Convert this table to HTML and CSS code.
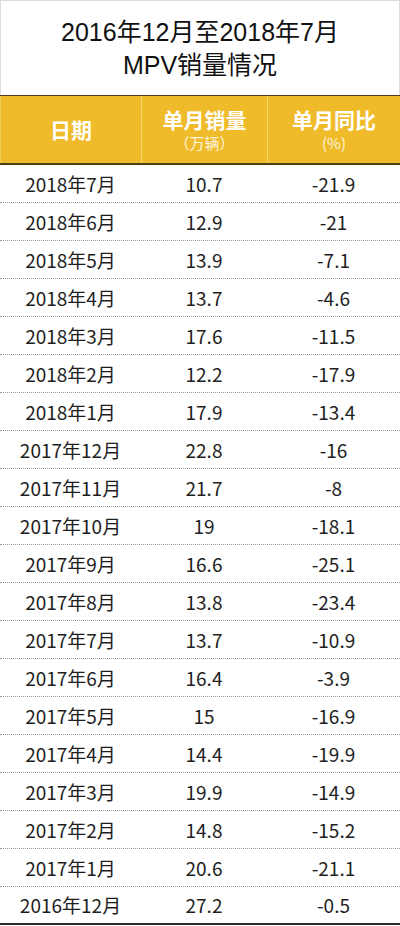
FILE: index.html
```html
<!DOCTYPE html>
<html lang="zh">
<head>
<meta charset="utf-8">
<link rel="stylesheet" href="styles.css">
</head>
<body>
<div class="page">
  <div class="title">
    <div>2016年12月至2018年7月</div>
    <div>MPV销量情况</div>
  </div>
  <div class="head">
    <div class="hcell"><span class="hmain">日期</span></div>
    <div class="hcell"><span class="hmain">单月销量</span><span class="hsub">（万辆）</span></div>
    <div class="hcell"><span class="hmain">单月同比</span><span class="hsub">(%)</span></div>
  </div>
  <div class="rows">
    <div class="row"><span>2018年7月</span><span>10.7</span><span>-21.9</span></div>
    <div class="row"><span>2018年6月</span><span>12.9</span><span>-21</span></div>
    <div class="row"><span>2018年5月</span><span>13.9</span><span>-7.1</span></div>
    <div class="row"><span>2018年4月</span><span>13.7</span><span>-4.6</span></div>
    <div class="row"><span>2018年3月</span><span>17.6</span><span>-11.5</span></div>
    <div class="row"><span>2018年2月</span><span>12.2</span><span>-17.9</span></div>
    <div class="row"><span>2018年1月</span><span>17.9</span><span>-13.4</span></div>
    <div class="row"><span>2017年12月</span><span>22.8</span><span>-16</span></div>
    <div class="row"><span>2017年11月</span><span>21.7</span><span>-8</span></div>
    <div class="row"><span>2017年10月</span><span>19</span><span>-18.1</span></div>
    <div class="row"><span>2017年9月</span><span>16.6</span><span>-25.1</span></div>
    <div class="row"><span>2017年8月</span><span>13.8</span><span>-23.4</span></div>
    <div class="row"><span>2017年7月</span><span>13.7</span><span>-10.9</span></div>
    <div class="row"><span>2017年6月</span><span>16.4</span><span>-3.9</span></div>
    <div class="row"><span>2017年5月</span><span>15</span><span>-16.9</span></div>
    <div class="row"><span>2017年4月</span><span>14.4</span><span>-19.9</span></div>
    <div class="row"><span>2017年3月</span><span>19.9</span><span>-14.9</span></div>
    <div class="row"><span>2017年2月</span><span>14.8</span><span>-15.2</span></div>
    <div class="row"><span>2017年1月</span><span>20.6</span><span>-21.1</span></div>
    <div class="row last"><span>2016年12月</span><span>27.2</span><span>-0.5</span></div>
  </div>
</div>
</body>
</html>
```
FILE: styles.css
```css
html, body {
  margin: 0;
  padding: 0;
  background: #fff;
}
.page {
  width: 400px;
  font-family: "Noto Sans CJK SC", sans-serif;
  color: #222;
}
.title {
  box-sizing: border-box;
  height: 95px;
  border: 1px solid #dcdcdc;
  border-bottom: none;
  display: flex;
  flex-direction: column;
  align-items: center;
  justify-content: center;
  font-family: "Liberation Sans", "Noto Sans CJK SC", sans-serif;
  font-size: 25px;
  line-height: 33px;
  color: #111;
  padding-top: 2px;
}
.head {
  display: grid;
  grid-template-columns: 141px 126px 1fr;
  height: 67px;
  background: #efbb2a;
  border-top: 1px solid #4d3f1c;
  border-bottom: 2px solid #4d3f1c;
}
.hcell {
  display: flex;
  flex-direction: column;
  align-items: center;
  justify-content: center;
  color: #fff;
  border-left: 1px solid #f6d36e;
}
.hcell:first-child {
  border-left: 1px solid #f3cd5c;
}
.hmain {
  font-size: 21px;
  font-weight: bold;
  line-height: 25px;
}
.hsub {
  font-size: 15px;
  line-height: 18px;
  margin-top: 2px;
  color: #fdf3dc;
}
.row {
  display: grid;
  grid-template-columns: 141px 126px 1fr;
  border-bottom: 1px dotted #9a9a9a;
  align-items: center;
  font-size: 19px;
  line-height: 24px;
  height: 37px;
  color: #1e1e1e;
}
.row span {
  text-align: center;
}
.row.last {
  border-bottom: 2px solid #2a2a2a;
  height: 36px;
}
```
